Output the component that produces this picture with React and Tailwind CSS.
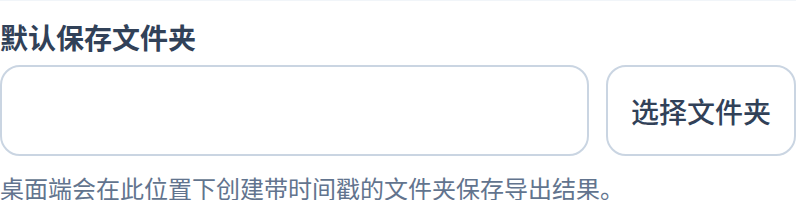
export default function App() {
  return (
    <div className="w-[796px] h-[200px] overflow-hidden bg-white border-t border-slate-100 pt-[18px] font-['Noto_Sans_CJK_SC',sans-serif]">
      <label className="block text-[28px] leading-[36px] font-semibold text-slate-700">
        默认保存文件夹
      </label>
      <div className="mt-[10px] flex gap-[17px]">
        <input
          type="text"
          className="h-[91px] flex-1 min-w-0 rounded-[20px] border-2 border-slate-300 bg-white px-5 text-[28px] outline-none"
        />
        <button
          type="button"
          className="h-[91px] rounded-[20px] border-2 border-slate-300 bg-white px-[23px] text-[28px] font-medium text-slate-700"
        >
          选择文件夹
        </button>
      </div>
      <p className="mt-[18px] text-[24px] leading-[28px] text-slate-500">
        桌面端会在此位置下创建带时间戳的文件夹保存导出结果。
      </p>
    </div>
  );
}
